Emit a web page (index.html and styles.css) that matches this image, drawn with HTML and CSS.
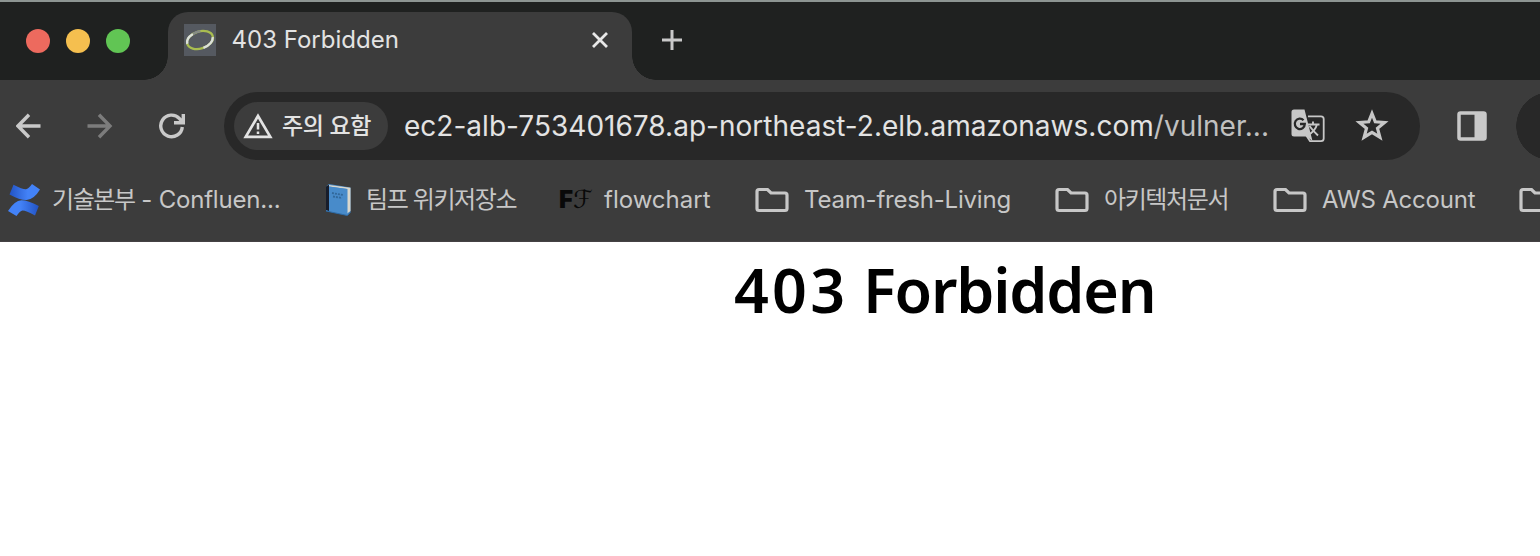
FILE: index.html
```html
<!DOCTYPE html>
<html lang="ko">
<head>
<meta charset="utf-8">
<title>403 Forbidden</title>
<link rel="stylesheet" href="styles.css">
</head>
<body>
<svg class="defs" width="0" height="0" aria-hidden="true">
  <symbol id="folder" viewBox="0 0 34 26"><path d="M4 2.5H12.5L16 6H30Q32 6 32 8V21.5Q32 23.5 30 23.5H4Q2 23.5 2 21.5V4.5Q2 2.5 4 2.5Z" fill="none" stroke="#c7c7c7" stroke-width="3.2"/></symbol>
</svg>
<div class="browser">
  <div class="tabstrip">
    <div class="lights"><i class="light red"></i><i class="light yellow"></i><i class="light green"></i></div>
    <div class="tab">
      <svg class="favicon" viewBox="0 0 32 32"><rect width="32" height="32" fill="#555960"/><g fill="none" stroke-width="2.3" transform="rotate(-17 16 16)"><ellipse cx="16" cy="16" rx="13.3" ry="8.6" stroke="#a9bd50"/><path d="M2.7 16A13.3 8.6 0 0 1 11 8.2" stroke="#dce0dc"/><path d="M11 8.2A13.3 8.6 0 0 1 19 7.7" stroke="#858a87"/><path d="M29 17A13.3 8.6 0 0 1 17 24.5" stroke="#dce0dc"/></g></svg>
      <span class="tab-title">403 Forbidden</span>
      <svg class="close" viewBox="0 0 18 18"><path d="M2 2L16 16M16 2L2 16" stroke="#e8e8e8" stroke-width="2.8"/></svg>
    </div>
    <svg class="newtab" viewBox="0 0 20 20"><path d="M10 0V20M0 10H20" stroke="#c9c9c9" stroke-width="3"/></svg>
  </div>
  <div class="toolbar">
    <svg class="nav" viewBox="0 0 26 26"><path d="M24.500 13H3M13 1.800L2 13L13 24.200" fill="none" stroke="#c9c9c9" stroke-width="3.400"/></svg>
    <svg class="nav forward" viewBox="0 0 26 26"><path d="M.5 13H22M12 1.800L23 13L12 24.200" fill="none" stroke="#7c7c7c" stroke-width="3.400"/></svg>
    <svg class="nav reload" viewBox="0 0 26 26"><path d="M23.300 14A10.800 10.800 0 1 1 20.500 5.600L23 8.500M24.300 1V9.700H15" fill="none" stroke="#c9c9c9" stroke-width="3.400"/></svg>
    <div class="omnibox">
      <div class="chip">
        <svg class="warn" viewBox="0 0 30 26"><path d="M15 3L27.300 23.800H2.700Z" fill="none" stroke="#e3e3e3" stroke-width="2.700"/><path d="M15 10V16.500M15 18.500V21" stroke="#e3e3e3" stroke-width="2.500"/></svg>
        <span class="chip-text">주의 요함</span>
      </div>
      <div class="url">ec2-alb-753401678.ap-northeast-2.elb.amazonaws.com<span class="path">/vulner...</span></div>
      <svg class="translate" viewBox="0 0 34 34"><path d="M17 7.300H30Q32.700 7.300 32.700 10V29.500Q32.700 32.200 30 32.200H19L15 26" fill="none" stroke="#c7c7c7" stroke-width="1.800"/><path d="M3 .5H13.500L21.500 32L15.500 27.500H3Q.5 27.500 .5 25V3Q.5 .5 3 .5Z" fill="#c7c7c7"/><path d="M12.500 11.300A5 5.300 0 1 0 13.800 15H9" fill="none" stroke="#292929" stroke-width="2.300"/><path d="M16.500 15.500H28.500M22 12.500V15.500M26 15.500Q24 22.500 17 26M18.500 17Q22 22 27 26.500" fill="none" stroke="#c7c7c7" stroke-width="1.900"/></svg>
      <svg class="star" viewBox="0 0 34 34"><path d="M17 4.500L20.300 12.800L29.500 13.500L22.500 19.300L24.900 28.200L17 23.400L9.100 28.200L11.500 19.300L4.500 13.500L13.700 12.800Z" fill="none" stroke="#c7c7c7" stroke-width="3.200"/></svg>
    </div>
    <svg class="panel" viewBox="0 0 30 30"><rect x="2" y="2" width="26" height="26" rx="1.500" fill="none" stroke="#c9c9c9" stroke-width="3.500"/><path d="M17.500 2H28V28H17.500Z" fill="#c9c9c9"/></svg>
    <div class="next-pill"></div>
  </div>
  <div class="bookmarks">
    <div class="bookmark confluence">
      <svg class="icon" viewBox="0 0 32 32"><defs><linearGradient id="c1" x1="1" x2="0"><stop offset=".4" stop-color="#4382f7"/><stop offset="1" stop-color="#2253c4"/></linearGradient><linearGradient id="c2"><stop offset=".4" stop-color="#4382f7"/><stop offset="1" stop-color="#2253c4"/></linearGradient></defs><path d="M5.500 .7Q15 5.500 18 5.200Q20.500 5 24 0L32 5.500Q26 15.500 18.500 16Q12 16.200 1.500 10.500Z" fill="url(#c1)"/><path d="M8.500 32Q12 26.500 14.500 26.400Q17.500 26.200 27 31.500L30.800 22Q20 16.200 13.500 16.200Q6.500 16.500 0 27Z" fill="url(#c2)"/></svg>
      <span class="label"><span class="hangul">기술본부</span> - Confluen...</span>
    </div>
    <div class="bookmark wiki">
      <svg class="icon" viewBox="0 0 32 32"><path d="M3 2.500L6 0L27.500 3.500V28L24 31.500L3 27Z" fill="#4a89c4"/><path d="M3 2.500L6 .8V27L3 26Z" fill="#171d2b"/><path d="M6 1L27.500 3.800V27L24 29.500V5L6 2.500Z" fill="#d9d7cd"/><path d="M6 2.500L24.500 5V31L6 27Z" fill="#488bca"/><path d="M3 27L24.500 31.500L27.500 28.300" fill="none" stroke="#2d6ba6"/><path d="M9 9L20 11M10 12.500L19 14" stroke="#32699c" stroke-width="1.800" stroke-dasharray="2 1"/></svg>
      <span class="label hangul">팀프 위키저장소</span>
    </div>
    <div class="bookmark flow">
      <div class="ff"><b>F</b><span>ℱ</span></div>
      <span class="label flow-label">flowchart</span>
    </div>
    <div class="bookmark team"><svg class="folder"><use href="#folder"/></svg><span class="label">Team-fresh-Living</span></div>
    <div class="bookmark arch"><svg class="folder"><use href="#folder"/></svg><span class="label hangul">아키텍처문서</span></div>
    <div class="bookmark aws"><svg class="folder"><use href="#folder"/></svg><span class="label">AWS Account</span></div>
    <div class="bookmark last"><svg class="folder"><use href="#folder"/></svg></div>
  </div>
</div>
<main class="page"><h1 class="heading"><span class="code">403</span> Forbidden</h1></main>
</body>
</html>
```
FILE: styles.css
```css
* { box-sizing: border-box; }
body { margin: 0; width: 1540px; height: 556px; overflow: hidden; background: #fff; font-family: Inter, "Noto Sans CJK KR", sans-serif; white-space: nowrap; }
svg { display: block; flex: none; }
.defs { position: absolute; }
.browser { height: 242px; background: #3c3c3c; overflow: hidden; border-bottom: 1px solid #454244; }
.tabstrip { height: 80px; display: flex; background: #1f2120; border-top: 2px solid #8d9592; }
.lights { width: 168px; height: 78px; padding: 27px 0 0 26px; display: flex; gap: 16px; }
.light { width: 24px; height: 24px; border-radius: 50%; }
.red { background: #ed6a5e; }
.yellow { background: #f5bf4f; }
.green { background: #61c554; }
.tab { position: relative; width: 464px; height: 68px; margin-top: 10px; padding: 0 23px 12px 16px; border-radius: 20px 20px 0 0; background: #3c3c3c; display: flex; align-items: center; }
.tab::before, .tab::after { content: ""; position: absolute; bottom: 0; width: 24px; height: 24px; }
.tab::before { right: 100%; background: radial-gradient(circle at 0 0, transparent 23.5px, #3c3c3c 24px); }
.tab::after { left: 100%; background: radial-gradient(circle at 100% 0, transparent 23.5px, #3c3c3c 24px); }
.favicon { width: 32px; height: 32px; }
.tab-title { margin-left: 15.5px; flex: 1; font-size: 24px; line-height: 30px; color: #e3e3e3; }
.close { width: 18px; height: 18px; }
.newtab { width: 20px; height: 20px; margin: 28px 0 0 30px; }
.toolbar { height: 92px; padding: 12px 0 12px 16px; display: flex; align-items: center; }
.nav { width: 26px; height: 26px; }
.forward { margin-left: 45px; }
.reload { margin-left: 46px; }
.omnibox { width: 1196px; height: 68px; margin-left: 39px; padding-left: 10px; border-radius: 34px; background: #282828; display: flex; align-items: center; flex: none; }
.chip { width: 154px; height: 48px; padding-left: 9px; border-radius: 24px; background: #3c3c3c; display: flex; align-items: center; }
.warn { width: 30px; height: 26px; }
.chip-text { margin-left: 9px; padding-bottom: 4px; font: 500 23px/34px "Noto Sans CJK KR", sans-serif; letter-spacing: -0.4px; color: #e3e3e3; }
.url { width: 887px; margin-left: 16px; font-size: 28px; line-height: 34px; letter-spacing: 0.02px; color: #e3e3e3; }
.path { color: #c0c0c0; }
.translate { width: 34px; height: 34px; }
.star { width: 34px; height: 34px; margin-left: 30px; }
.panel { width: 30px; height: 30px; margin-left: 37px; }
.next-pill { width: 24px; height: 68px; margin-left: 29px; border-radius: 34px 0 0 34px / 34px 0 0 34px; background: radial-gradient(circle at 34px 34px, #282828 33.5px, transparent 34px); flex: none; }
.bookmarks { height: 69px; padding: 12px 0 0 8px; display: flex; align-items: flex-start; }
.bookmark { height: 32px; display: flex; align-items: center; flex: none; }
.icon { width: 32px; height: 32px; margin-right: 12px; }
.folder { width: 34px; height: 26px; margin-right: 15px; }
.label { font-size: 24px; line-height: 32px; letter-spacing: -0.2px; color: #c7c7c7; }
.flow-label { letter-spacing: 0; }
.hangul { letter-spacing: -1.4px; }
.confluence { width: 315px; }
.wiki { width: 236px; }
.wiki .icon { margin-right: 11px; }
.flow { width: 196px; }
.team { width: 300px; }
.arch { width: 218px; }
.aws { width: 246px; }
.last { width: 21px; overflow: hidden; }
.ff { width: 32px; margin-right: 13px; display: flex; align-items: center; color: #090909; line-height: 32px; }
.ff b { font-size: 24px; font-weight: 900; }
.ff span { font: 25px/32px "DejaVu Sans", "DejaVu Serif", serif; }
.page { height: 314px; padding-left: 734px; }
.heading { margin: 0; padding-top: 3px; font: 600 61px/90px "Noto Sans", sans-serif; letter-spacing: -1.2px; color: #000; }
.code { letter-spacing: 3.2px; }
```
